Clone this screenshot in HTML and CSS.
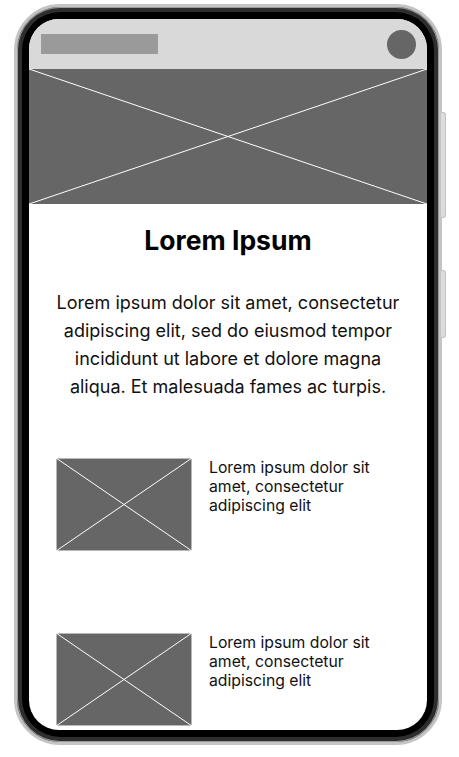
FILE: index.html
```html
<!DOCTYPE html>
<html lang="en">
<head>
  <meta charset="UTF-8" />
  <meta name="viewport" content="width=device-width, initial-scale=1" />
  <title>Mobile wireframe</title>
  <link rel="stylesheet" href="styles.css">
</head>
<body>
  <div class="phone">
    <span class="side-btn side-btn-top"></span>
    <span class="side-btn side-btn-bottom"></span>

    <div class="bezel">
      <div class="screen">

        <header class="app-bar">
          <div class="app-bar-title"></div>
          <div class="app-bar-avatar"></div>
        </header>

        <div class="placeholder hero">
          <svg viewBox="0 0 100 100" preserveAspectRatio="none">
            <line x1="0" y1="0" x2="100" y2="100" />
            <line x1="100" y1="0" x2="0" y2="100" />
          </svg>
        </div>

        <h1 class="title">Lorem Ipsum</h1>

        <p class="intro">
          Lorem ipsum dolor sit amet, consectetur adipiscing elit, sed do eiusmod tempor
          incididunt ut labore et dolore magna aliqua. Et malesuada fames ac turpis.
        </p>

        <div class="card-list">
          <div class="card">
            <div class="placeholder thumb">
              <svg viewBox="0 0 100 100" preserveAspectRatio="none">
                <line x1="0" y1="0" x2="100" y2="100" />
                <line x1="100" y1="0" x2="0" y2="100" />
              </svg>
            </div>
            <p class="card-text">Lorem ipsum dolor sit amet, consectetur adipiscing elit</p>
          </div>

          <div class="card">
            <div class="placeholder thumb">
              <svg viewBox="0 0 100 100" preserveAspectRatio="none">
                <line x1="0" y1="0" x2="100" y2="100" />
                <line x1="100" y1="0" x2="0" y2="100" />
              </svg>
            </div>
            <p class="card-text">Lorem ipsum dolor sit amet, consectetur adipiscing elit</p>
          </div>
        </div>

      </div>
    </div>
  </div>
</body>
</html>
```

FILE: styles.css
```css
/* Page */
body {
  margin: 0;
  background: #ffffff;
  font-family: 'Inter', 'Noto Sans', sans-serif;
  color: #111111;
}

/* Phone frame */
.phone {
  position: relative;
  width: 428px;
  height: 741px;
  margin: 4px 0 0 14px;
  border: 3px solid #c4c4c4;
  border-radius: 46px;
  background: #2e2e2e;
  padding: 5px;
  box-sizing: border-box;
  box-shadow: inset 0 0 0 1px #9a9a9a;
}

.side-btn {
  position: absolute;
  right: -7px;
  width: 4px;
  background: #dcdcdc;
  border: 1px solid #c2c2c2;
  border-left: none;
  border-radius: 0 3px 3px 0;
}

.side-btn-top {
  top: 105px;
  height: 104px;
}

.side-btn-bottom {
  top: 263px;
  height: 66px;
}

.bezel {
  height: 100%;
  background: #000000;
  border-radius: 38px;
  padding: 7px;
  box-sizing: border-box;
}

.screen {
  height: 100%;
  background: #ffffff;
  border-radius: 30px;
  overflow: hidden;
}

/* Top bar */
.app-bar {
  height: 50px;
  background: #d9d9d9;
  display: flex;
  align-items: center;
  justify-content: space-between;
  padding: 0 11px 0 12px;
}

.app-bar-title {
  width: 117px;
  height: 20px;
  background: #9a9a9a;
}

.app-bar-avatar {
  width: 29px;
  height: 29px;
  border-radius: 50%;
  background: #666666;
}

/* Image placeholders */
.placeholder {
  background: #666666;
}

.placeholder svg {
  display: block;
  width: 100%;
  height: 100%;
}

.placeholder line {
  stroke: #ffffff;
  stroke-width: 1;
  vector-effect: non-scaling-stroke;
}

.hero {
  height: 135px;
}

/* Text */
.title {
  margin: 20px 0 0;
  font-size: 26.5px;
  line-height: 32px;
  font-weight: 700;
  text-align: center;
  color: #000000;
}

.intro {
  margin: 33px 0 0;
  padding: 0 22px;
  font-size: 18px;
  line-height: 28px;
  text-align: center;
}

/* Cards */
.card-list {
  display: flex;
  flex-direction: column;
  gap: 82px;
  margin-top: 57px;
  padding: 0 27px;
}

.card {
  display: flex;
  align-items: flex-start;
  gap: 17px;
}

.thumb {
  flex: none;
  width: 136px;
  height: 93px;
  box-shadow: inset 0 0 0 1px #b8b8b8;
}

.card-text {
  margin: 0;
  width: 180px;
  font-size: 15.75px;
  line-height: 19px;
}
```
